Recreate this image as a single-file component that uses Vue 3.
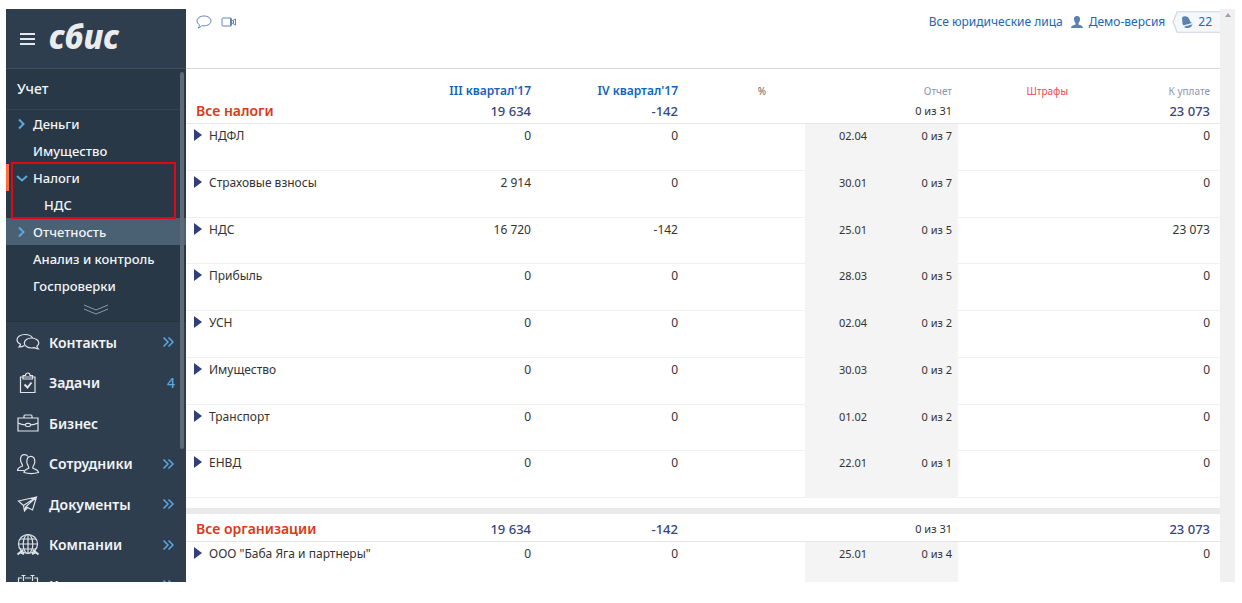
<script setup>
const subsections = [
  { label: 'Деньги', arrow: 'right' },
  { label: 'Имущество' },
]
const afterTaxes = [
  { label: 'Отчетность', arrow: 'right', active: true },
  { label: 'Анализ и контроль' },
  { label: 'Госпроверки' },
]
const sections = [
  { label: 'Контакты', icon: 'chat', more: true },
  { label: 'Задачи', icon: 'task', count: 4 },
  { label: 'Бизнес', icon: 'case' },
  { label: 'Сотрудники', icon: 'people', more: true },
  { label: 'Документы', icon: 'plane', more: true },
  { label: 'Компании', icon: 'globe', more: true },
  { label: 'Календарь', icon: 'calendar', more: true },
]
const taxes = [
  { name: 'НДФЛ', q3: '0', q4: '0', date: '02.04', report: '0 из 7', pay: '0' },
  { name: 'Страховые взносы', q3: '2 914', q4: '0', date: '30.01', report: '0 из 7', pay: '0' },
  { name: 'НДС', q3: '16 720', q4: '-142', date: '25.01', report: '0 из 5', pay: '23 073' },
  { name: 'Прибыль', q3: '0', q4: '0', date: '28.03', report: '0 из 5', pay: '0' },
  { name: 'УСН', q3: '0', q4: '0', date: '02.04', report: '0 из 2', pay: '0' },
  { name: 'Имущество', q3: '0', q4: '0', date: '30.03', report: '0 из 2', pay: '0' },
  { name: 'Транспорт', q3: '0', q4: '0', date: '01.02', report: '0 из 2', pay: '0' },
  { name: 'ЕНВД', q3: '0', q4: '0', date: '22.01', report: '0 из 1', pay: '0' },
]
const companies = [
  { name: 'ООО "Баба Яга и партнеры"', q3: '0', q4: '0', date: '25.01', report: '0 из 4', pay: '0' },
]
const groups = [
  { title: 'Все налоги', rows: taxes, first: true },
  { title: 'Все организации', rows: companies },
]
</script>

<template>
  <div class="app">
    <aside class="side">
      <div class="brand">
        <button class="burger" aria-label="Меню"><i></i><i></i><i></i></button>
        <a href="#" class="logo">сбис</a>
      </div>
      <nav class="nav">
        <div class="sub">
          <a href="#" class="heading">Учет</a>
          <a v-for="s in subsections" :key="s.label" href="#" class="sub-item">
            <svg v-if="s.arrow" class="arr" viewBox="0 0 12 12"><path d="M3 1.500 7.500 6 3 10.500" /></svg>
            <span v-else class="arr"></span>{{ s.label }}
          </a>
          <div class="taxes">
            <a href="#" class="sub-item current">
              <svg class="arr" viewBox="0 0 12 12"><path d="M1 4 6 8.500 11 4" /></svg>Налоги
            </a>
            <a href="#" class="sub-item nested">НДС</a>
          </div>
          <a v-for="s in afterTaxes" :key="s.label" href="#" class="sub-item" :class="{ active: s.active }">
            <svg v-if="s.arrow" class="arr" viewBox="0 0 12 12"><path d="M3 1.500 7.500 6 3 10.500" /></svg>
            <span v-else class="arr"></span>{{ s.label }}
          </a>
          <button class="expand" aria-label="Показать ещё">
            <svg viewBox="0 0 26 12"><path d="M1 1 13 6 25 1M1 5 13 10 25 5" /></svg>
          </button>
        </div>
        <a v-for="s in sections" :key="s.label" href="#" class="item">
          <svg class="ico" viewBox="0 0 24 24">
            <g v-if="s.icon === 'chat'">
              <path d="M8.500 15.500C7 16.500 5 17 3 17c1-1 1.500-1.800 1.500-2.800C2.500 13.200 1 11.800 1 10c0-3.200 3.500-5.500 8-5.500 3.600 0 6.500 1.300 7.600 3.500" />
              <path d="M15.500 8c-4 0-7.200 2.200-7.200 5s3.200 5 7.200 5c1 0 1.800-.1 2.600-.4 1.300.9 2.700 1.200 4.200 1.200-.9-.9-1.300-1.700-1.400-2.600 1.200-.9 1.900-1.900 1.900-3.200 0-2.800-3.300-5-7.300-5z" />
            </g>
            <g v-else-if="s.icon === 'task'">
              <path d="M4.500 6H19v15.500H4.500zM7 8V4.500h2.500C9.500 3 10.500 2 11.800 2s2.200 1 2.200 2.500h2.500V8z" />
              <path class="bold" d="M8.500 13.500l3 3 4-5" />
            </g>
            <g v-else-if="s.icon === 'case'">
              <path d="M2 7h20v13H2zM8 7V5q0-1 1-1h6q1 0 1 1v2M2 12c2.500 1.300 5 1.800 7.500 1.800M22 12c-2.500 1.300-5 1.800-7.500 1.800" />
              <rect x="9.500" y="12.300" width="5" height="3.200" rx="1.500" />
            </g>
            <g v-else-if="s.icon === 'people'">
              <path d="M8 18.500H1.500c0-3 3-3.500 5-4.500.5-1.800-2-3-2-6.300C4.500 4.500 6 2.700 8.500 2.700c1.500 0 2.700.6 3.300 1.800" />
              <path d="M8 20.500c0-3 3.500-3.300 4.800-4.500.5-1.800-2-3-2-6.300C10.800 6.500 12 4.300 14.800 4.300s4 2.200 4 5.400-2.500 4.500-2 6.300c1.200 1.200 5.700 1.500 5.700 4.500-4.500 1.300-10 1.300-14.500 0z" />
            </g>
            <g v-else-if="s.icon === 'plane'">
              <path d="M2.500 9 20.500 5 16.500 18 11.500 15.500 8.500 19 7.500 13.500zM7.500 13.500 20.500 5 9.800 14.800 8.500 19M9.800 14.800 11.500 15.500" />
            </g>
            <g v-else-if="s.icon === 'globe'">
              <circle cx="12" cy="11" r="9.500" />
              <ellipse cx="12" cy="11" rx="4.800" ry="9.500" />
              <path d="M12 1.500v19M2.500 11h19M4 6h16M4 16h16" />
              <path class="bold" d="M7 17l-5.500 4.500M17 17l5.500 4.500M5 19.500l3 1.500M19 19.500l-3 1.500" />
            </g>
            <g v-else>
              <path d="M6 5H2.500v17h19V5H18M9 5h6M7.500 2v6M16.500 2v6M5.500 2.500h4M14.500 2.500h4M2.500 11h19" />
            </g>
          </svg>
          <span class="label">{{ s.label }}</span>
          <span v-if="s.count" class="count">{{ s.count }}</span>
          <svg v-if="s.more" class="more" viewBox="0 0 12 12"><path d="M1.500 1.500 6 6 1.500 10.500M6.500 1.500 11 6 6.500 10.500" /></svg>
        </a>
        <span class="thumb"></span>
      </nav>
    </aside>

    <main class="main">
      <header class="top">
        <div class="tools">
          <button aria-label="Сообщения">
            <svg width="16" height="14" viewBox="0 0 16 14"><path d="M3.500 9.700C1.800 8.800 1 7.300 1 5.900 1 3.200 4 1 8 1s7 2.200 7 4.900-3 4.900-7 4.900c-.8 0-1.500 0-2.200-.2C4.800 12 3.500 12.800 2 13c1-.9 1.500-2 1.500-3.300z" /></svg>
          </button>
          <button aria-label="Видеозвонок">
            <svg width="16" height="14" viewBox="0 0 16 14"><path d="M2 3h7.500v8H2Q1 11 1 10V4Q1 3 2 3zM9.500 3q1 0 1 1v6q0 1-1 1M10.500 6.300 14.500 4v6l-4-2.300M12.500 5.500v3.200" /></svg>
          </button>
        </div>
        <div class="account">
          <a href="#">Все юридические лица</a>
          <svg class="person" viewBox="0 0 14 14"><path d="M7 1C4.800 1 3.800 2.500 4 4.500 4.200 6.500 5 7.500 5.500 8v1.500C4 10.300 1 10.500 1 13h12c0-2.500-3-2.700-4.500-3.500V8c.5-.5 1.300-1.500 1.500-3.500C10.200 2.500 9.200 1 7 1z" /></svg>
          <a href="#">Демо-версия</a>
          <a href="#" class="badge">
            <svg class="tag" viewBox="0 0 46 22" preserveAspectRatio="none"><path d="M47 .8H5L1 11l4 10.200H47" /></svg>
            <svg class="bell" viewBox="0 0 12 12"><path d="M1 1.500C3-.5 6.500 0 8 2.500l1.200 3 2.300 2L3 10 1.500 8z" /><path d="M3 10.700 11.500 8.300C11 10.500 9 12 6.500 12 4.800 12 3.500 11.600 3 10.700z" /><path class="cut" d="M2.300 9.900 11 7.500" /></svg>
            22
          </a>
        </div>
      </header>

      <table class="grid">
        <colgroup>
          <col class="c-name"><col class="c-q"><col class="c-q"><col class="c-pct"><col class="c-date"><col class="c-rep"><col class="c-fine"><col class="c-pay">
        </colgroup>
        <thead>
          <tr>
            <th></th>
            <th class="quarter"><a href="#">III квартал'17</a></th>
            <th class="quarter"><a href="#">IV квартал'17</a></th>
            <th class="pct">%</th>
            <th></th>
            <th>Отчет</th>
            <th class="fine">Штрафы</th>
            <th class="pay">К уплате</th>
          </tr>
        </thead>
        <tbody v-for="g in groups" :key="g.title">
          <tr v-if="!g.first" class="split"><td colspan="8"><div></div></td></tr>
          <tr class="total">
            <th scope="rowgroup">{{ g.title }}</th>
            <td class="sum">19 634</td>
            <td class="sum">-142</td>
            <td></td>
            <td></td>
            <td class="small">0 из 31</td>
            <td></td>
            <td class="sum pay">23 073</td>
          </tr>
          <tr v-for="r in g.rows" :key="r.name" class="row">
            <td class="name">
              <button aria-label="Развернуть"><svg width="8" height="14" viewBox="0 0 8 14"><path d="M0 1 8 7 0 13z" /></svg></button>{{ r.name }}
            </td>
            <td>{{ r.q3 }}</td>
            <td>{{ r.q4 }}</td>
            <td></td>
            <td class="small shade">{{ r.date }}</td>
            <td class="small shade">{{ r.report }}</td>
            <td></td>
            <td class="pay">{{ r.pay }}</td>
          </tr>
        </tbody>
      </table>
    </main>
    <div class="scroll"><i></i></div>
  </div>
</template>

<style>
body { margin: 0; background: #fff; overflow: hidden; }
</style>

<style scoped>
.app {
  box-sizing: border-box;
  display: flex;
  height: calc(100vh - 30px);
  margin: 9px 7px 21px 6px;
  overflow: hidden;
  font-family: "Noto Sans", "Open Sans", sans-serif;
  font-size: 13px;
  color: #333;
}
a { color: inherit; text-decoration: none; }
button { padding: 0; border: 0; background: none; font: inherit; color: inherit; cursor: pointer; }
svg { fill: none; display: block; }

.side { flex: 0 0 180px; background: #2f3e4e; color: #f2f4f6; overflow: hidden; }
.brand { display: flex; align-items: center; gap: 14px; height: 59px; padding-left: 14px; border-bottom: 1px solid #43515f; }
.burger { display: grid; gap: 3px; width: 15px; }
.burger i { height: 2px; background: #e4e8ec; }
.logo { font-size: 33px; line-height: 36px; font-weight: 800; font-style: italic; color: #e9ebed; padding-bottom: 4px; }
.nav { position: relative; }
.sub { background: #283846; border-bottom: 1px solid #243340; }
.heading { display: block; height: 40px; line-height: 40px; padding-left: 11px; font-size: 14px; font-weight: 500; border-bottom: 1px solid #344452; }
.sub-item { display: flex; align-items: center; height: 27px; padding-left: 10px; font-size: 13px; font-weight: 500; }
.sub-item.active { background: #4a6073; }
.arr { width: 12px; height: 12px; margin-right: 5px; stroke: #5ba9e0; stroke-width: 2; }
.taxes { position: relative; }
.taxes::after { content: ""; position: absolute; inset: -2px 10px -1px 5px; border: 2px solid #e30613; }
.current { box-shadow: inset 3px 0 #ff6b3d; }
.nested { padding-left: 38px; }
.expand { display: flex; justify-content: center; align-items: center; width: 100%; height: 22px; }
.expand svg { width: 26px; height: 12px; stroke: #8d98a3; }
.item { display: flex; align-items: center; height: 40px; padding: 0 11px 0 10px; font-size: 14px; font-weight: 600; }
.item:nth-of-type(even) { height: 41px; }
.ico { width: 24px; height: 24px; margin-right: 9px; stroke: #dfe4e8; stroke-width: 1.2; }
.bold { stroke-width: 2; }
.label { flex: 1; }
.more { width: 12px; height: 12px; stroke: #5ba9e0; stroke-width: 1.5; margin-right: 1px; }
.count { color: #5ba9e0; font-weight: 500; }
.thumb { position: absolute; top: 3px; right: 2px; width: 4px; height: 377px; border-radius: 2px; background: #5d6b78; }

.main { flex: 1; min-width: 0; overflow: hidden; }
.top { display: flex; justify-content: space-between; align-items: flex-start; height: 59px; border-bottom: 1px solid #d8d8d8; color: #1b66b5; }
.tools { display: flex; gap: 9px; padding: 6px 0 0 10px; }
.tools svg { stroke: #5e86bd; }
.account { display: flex; align-items: center; gap: 7px; padding-top: 2px; font-size: 12px; line-height: 22px; }
.person { width: 14px; height: 14px; fill: #5b80b2; margin-right: -2px; }
.badge { position: relative; isolation: isolate; display: flex; align-items: center; gap: 5px; padding: 0 8px 0 9px; }
.tag { position: absolute; z-index: -1; inset: 0; width: 100%; height: 100%; fill: #f4f8fd; stroke: #ccd3da; }
.bell { width: 12px; height: 12px; fill: #5b80b2; }
.cut { stroke: #f4f8fd; }

.grid { width: 100%; border-collapse: separate; border-spacing: 0; table-layout: fixed; }
.c-q { width: 147px; }
.c-pct { width: 121px; }
.c-date { width: 68px; }
.c-rep { width: 85px; }
.c-fine { width: 116px; }
.c-pay { width: 146px; }
th, td { padding: 0 6px 0 0; text-align: right; white-space: nowrap; }
thead th { height: 33px; line-height: 22px; vertical-align: bottom; font-size: 10px; font-weight: 400; color: #8c96ab; }
thead .quarter { font-size: 12px; font-weight: 600; color: #1064bd; }
thead .pct { padding-right: 39px; color: #666; }
thead .fine { color: #f0484f; }
.pay, thead .pay { padding-right: 10px; }
.total th, .total td { height: 18px; padding-bottom: 3px; line-height: 18px; border-bottom: 1px solid #e6e6e6; }
.total th { padding-left: 10px; text-align: left; font-size: 14px; font-weight: 600; color: #d83a16; }
.total .sum { font-size: 13px; font-weight: 500; color: #38457c; }
.row td { box-sizing: border-box; height: 47px; padding-top: 2px; line-height: 20px; vertical-align: top; border-bottom: 1px solid #f0f0f0; font-size: 12px; }
.row:nth-of-type(4n) td { height: 46px; }
.small, .row td.small { font-size: 11px; }
.row .shade { background: #f4f4f4; border-bottom-color: #f4f4f4; }
.row td.name { text-align: left; padding-left: 8px; }
.name button { display: inline-block; vertical-align: top; padding-top: 2px; margin-right: 7px; }
.name path { fill: #303f78; }
.split td { padding: 10px 0 6px; }
.split div { height: 6px; background: #e9e9e9; }
.scroll { flex: 0 0 15px; background: #f0f0f0; }
.scroll i { display: block; width: 0; margin: 4px auto 0; border: 3px solid transparent; border-top: 0; border-bottom: 4px solid #a0a0a0; }
</style>
